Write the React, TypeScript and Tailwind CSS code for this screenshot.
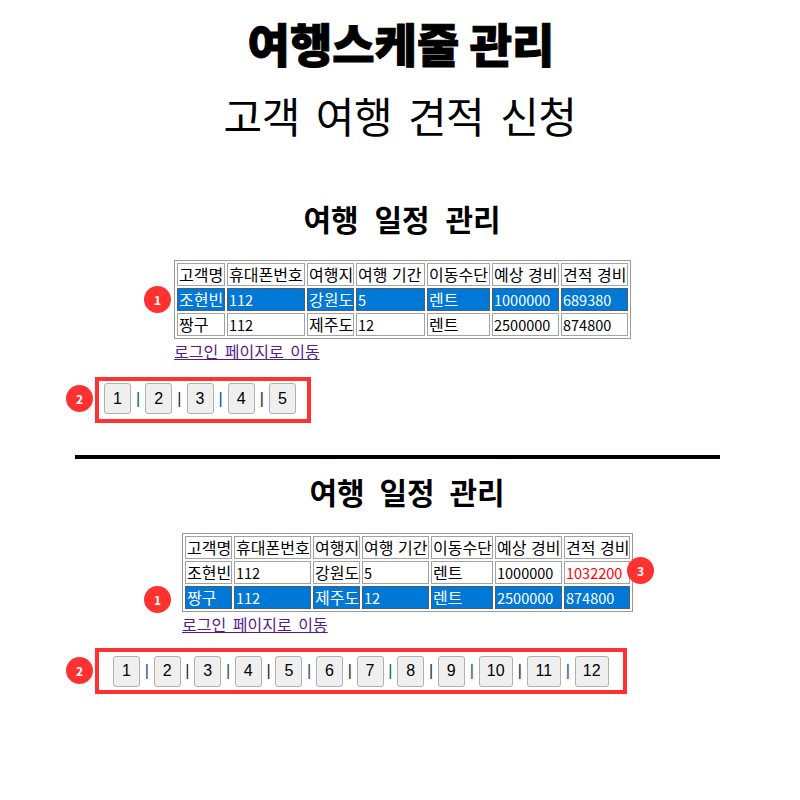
const cjk = "font-['Noto_Sans_CJK_KR','Noto_Sans',sans-serif]";

const header = ["고객명", "휴대폰번호", "여행지", "여행 기간", "이동수단", "예상 경비", "견적 경비"];

type Row = { cells: string[]; selected?: boolean; redLast?: boolean };

const Badge = ({ n, className }: { n: number; className: string }) => (
  <span
    className={`absolute flex h-[27px] w-[27px] items-center justify-center rounded-full bg-[#ff3131] text-[12px] font-bold text-white ${className}`}
  >
    {n}
  </span>
);

const ScheduleTable = ({ rows, widths, width }: { rows: Row[]; widths: number[]; width: string }) => (
  <table className={`table-fixed border-separate border-spacing-[2px] border border-[#9a9a9a] text-[16px] leading-[21px] text-black [word-spacing:1px] ${width}`}>
    <colgroup>
      {widths.map((w, i) => (
        <col key={i} style={{ width: w }} />
      ))}
    </colgroup>
    <thead>
      <tr>
        {header.map((h) => (
          <th key={h} className="h-[23px] whitespace-nowrap border border-[#a3a3a3] px-[1px] py-0 text-left font-normal">
            {h}
          </th>
        ))}
      </tr>
    </thead>
    <tbody>
      {rows.map((row) => (
        <tr key={row.cells[0]} className={row.selected ? "bg-[#0078d7] text-white" : ""}>
          {row.cells.map((c, i) => (
            <td
              key={i}
              className={`h-[23px] whitespace-nowrap border px-[1px] py-0 ${
                row.selected ? "border-[#4a5f72]" : "border-[#a3a3a3]"
              } ${row.redLast && i === 6 ? "text-[#ff0000]" : ""} ${/^\d+$/.test(c) ? "text-[14.5px]" : ""}`}
            >
              {c}
            </td>
          ))}
        </tr>
      ))}
    </tbody>
  </table>
);

const pipeColors = ["text-[#2e2418]", "text-[#12507d]", "text-[#2e2418]", "text-[#12507d]"];

const Pager = ({ count, gap, pad }: { count: number; gap: string; pad: string }) => (
  <div className={`flex h-[46px] w-fit items-center border-[4px] border-[#ff3131] font-['Liberation_Sans',sans-serif] text-[16px] text-black ${pad}`}>
    {Array.from({ length: count }, (_, i) => (
      <div key={i} className="flex items-center">
        {i > 0 && <span className={`text-center ${i >= 9 ? "w-[14px]" : gap} ${pipeColors[i % 4]}`}>|</span>}
        <button className={`h-[31px] rounded-[3px] border border-[#b0b0b0] bg-[#efefef] ${i >= 9 ? "w-[34px]" : "w-[27px]"}`}>
          {i + 1}
        </button>
      </div>
    ))}
  </div>
);

export default function App() {
  return (
    <div className={`h-[800px] w-[800px] overflow-hidden bg-white text-black ${cjk}`}>
      <h1 className="pl-[2px] text-center text-[46px] font-black leading-[84px] [-webkit-text-stroke:1px_black]">여행스케줄 관리</h1>
      <h2 className="text-center text-[42px] font-normal leading-[62px] tracking-[-0.5px] [word-spacing:7px]">고객 여행 견적 신청</h2>

      <h3 className="mt-[52px] pl-[4px] text-center text-[30px] font-bold leading-[40px] [word-spacing:9px]">여행 일정 관리</h3>
      <div className="relative ml-[174px] mt-[22px] w-fit">
        <Badge n={1} className="-left-[30px] top-[26px]" />
        <ScheduleTable
          width="w-[457px]"
          widths={[48, 78, 47, 69, 63, 67, 67]}
          rows={[
            { cells: ["조현빈", "112", "강원도", "5", "렌트", "1000000", "689380"], selected: true },
            { cells: ["짱구", "112", "제주도", "12", "렌트", "2500000", "874800"] },
          ]}
        />
      </div>
      <a className="ml-[174px] block w-fit text-[16px] leading-[24px] text-[#551a8b] underline [word-spacing:3px]">로그인 페이지로 이동</a>
      <div className="relative ml-[95px] mt-[14px] w-fit">
        <Badge n={2} className="-left-[29px] top-[8px]" />
        <Pager count={5} gap="w-[14.25px]" pad="pb-[3px] pl-[5px] pr-[11px]" />
      </div>

      <hr className="ml-[75px] mt-[32px] h-[4px] w-[645px] border-0 bg-black" />

      <h3 className="mt-[12px] pl-[14px] text-center text-[30px] font-bold leading-[40px] [word-spacing:8px]">여행 일정 관리</h3>
      <div className="relative ml-[182px] mt-[22px] w-fit">
        <Badge n={1} className="-left-[38px] top-[53px]" />
        <Badge n={3} className="-right-[21px] top-[24px]" />
        <ScheduleTable
          width="w-[451px]"
          widths={[47, 77, 47, 67, 62, 67, 66]}
          rows={[
            { cells: ["조현빈", "112", "강원도", "5", "렌트", "1000000", "1032200"], redLast: true },
            { cells: ["짱구", "112", "제주도", "12", "렌트", "2500000", "874800"], selected: true },
          ]}
        />
      </div>
      <a className="ml-[182px] block w-fit text-[16px] leading-[24px] text-[#551a8b] underline [word-spacing:3px]">로그인 페이지로 이동</a>
      <div className="relative ml-[95px] mt-[12px] w-fit">
        <Badge n={2} className="-left-[29px] top-[9px]" />
        <Pager count={12} gap="w-[13.6px]" pad="pl-[14px] pr-[14px]" />
      </div>
    </div>
  );
}
